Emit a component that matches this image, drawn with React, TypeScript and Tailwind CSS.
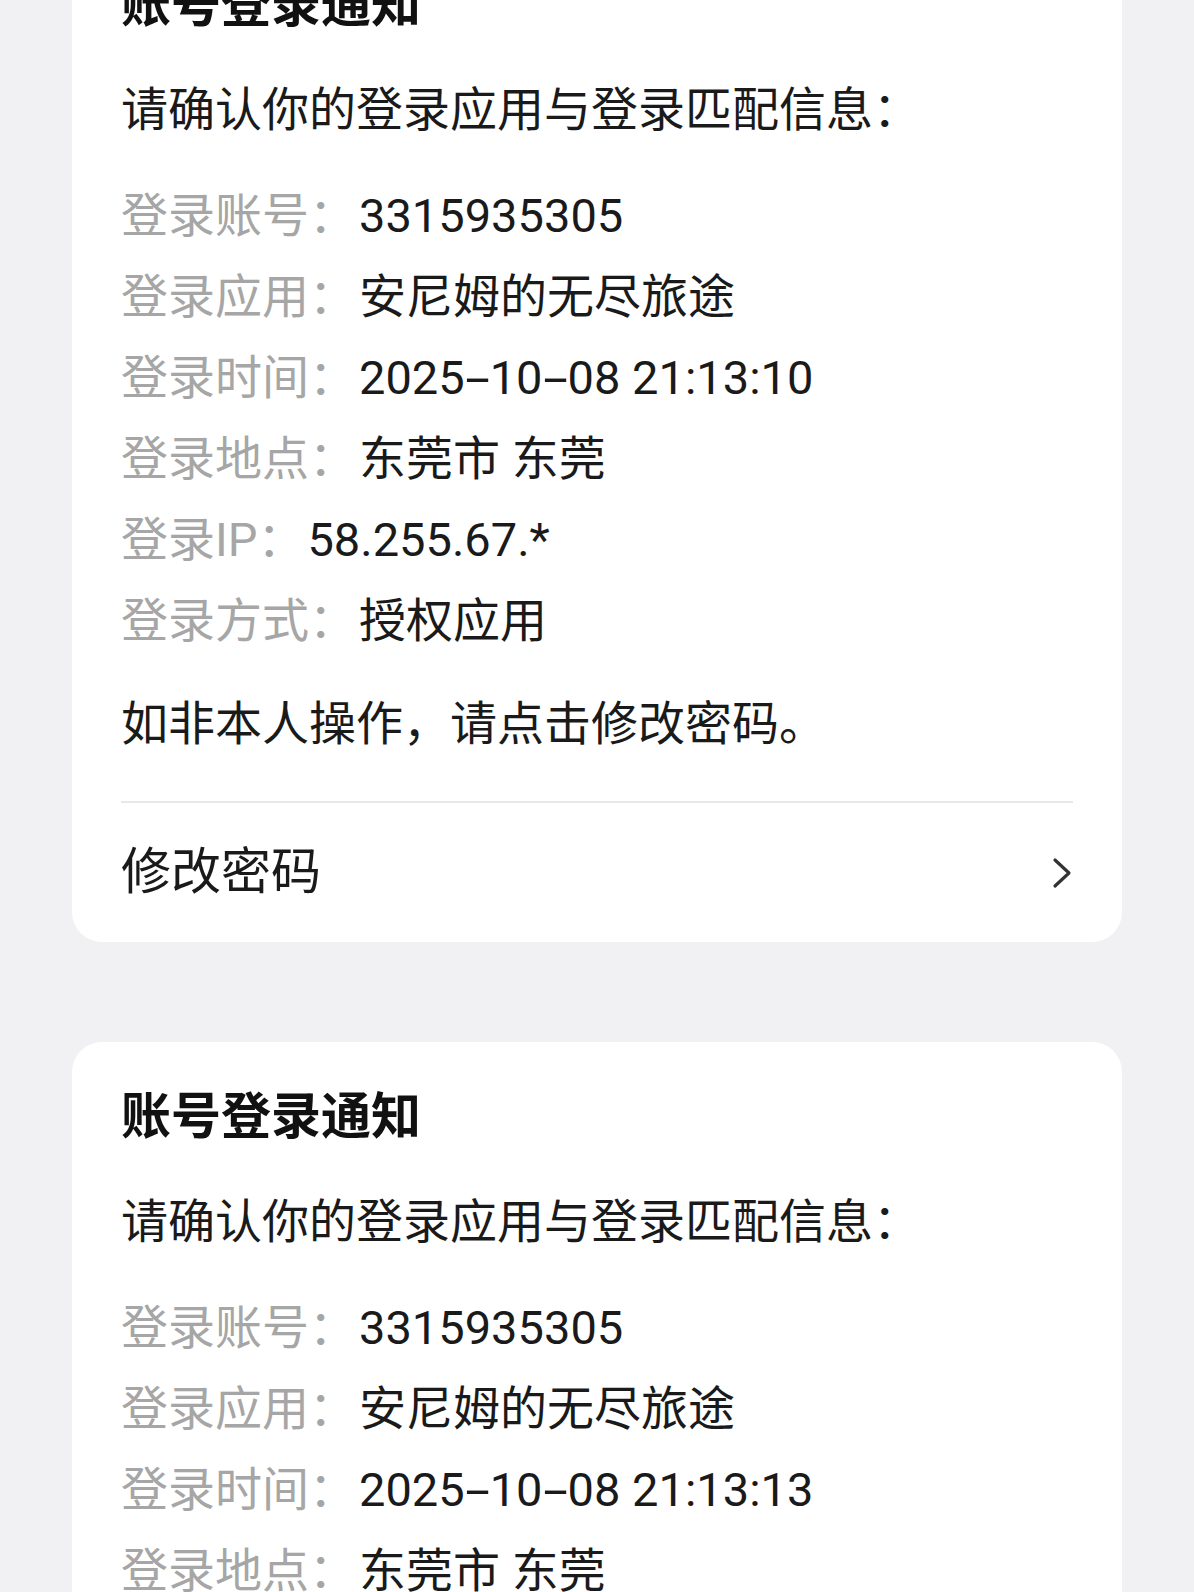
import React from "react";

type Row = [string, string];

const font = "font-[family-name:Roboto,'Noto_Sans_CJK_SC',sans-serif]";

function Value({ text }: { text: string }) {
  // the reference font draws a long hyphen; stretch Roboto's to match
  return (
    <>
      {text.split("").map((ch, i) =>
        ch === "-" ? (
          <span key={i} className="mx-[6px] inline-block scale-x-[1.9]">
            -
          </span>
        ) : (
          <React.Fragment key={i}>{ch}</React.Fragment>
        )
      )}
    </>
  );
}

function Chevron() {
  return (
    <svg width="22" height="34" viewBox="0 0 22 34" fill="none">
      <polyline
        points="4,4 18,17 4,30"
        stroke="#333333"
        strokeWidth="3.2"
        strokeLinecap="round"
        strokeLinejoin="round"
      />
    </svg>
  );
}

function NoticeCard({ time, className = "" }: { time: string; className?: string }) {
  const rows: Row[] = [
    ["登录账号：", "3315935305"],
    ["登录应用：", "安尼姆的无尽旅途"],
    ["登录时间：", time],
    ["登录地点：", "东莞市 东莞"],
    ["登录IP：", "58.255.67.*"],
    ["登录方式：", "授权应用"],
  ];

  return (
    <div className={`rounded-[30px] bg-white px-[49px] pt-[45px] ${className}`}>
      <h2 className="text-[50px] leading-[60px] font-bold text-[#111111]">账号登录通知</h2>
      <p className="mt-[34px] text-[47px] leading-[81px] text-[#1a1a1a]">请确认你的登录应用与登录匹配信息：</p>
      <div className="mt-[25px] flex flex-col">
        {rows.map(([label, value]) => (
          <p key={label} className="text-[47px] leading-[81px] whitespace-nowrap">
            <span className="text-[#a6a6a6]">{label}</span>
            <span className="ml-[3px] text-[#1a1a1a]">
              <Value text={value} />
            </span>
          </p>
        ))}
      </div>
      <p className="mt-[22px] text-[47px] leading-[81px] text-[#1a1a1a]">如非本人操作，请点击修改密码。</p>
      <div className="mt-[37px] h-[2px] bg-[#e8e8e8]" />
      <div className="flex h-[139px] items-center justify-between">
        <span className="text-[50px] text-[#1a1a1a]">修改密码</span>
        <Chevron />
      </div>
    </div>
  );
}

export default function App() {
  return (
    <div className={`min-h-screen overflow-hidden bg-[#f1f1f3] px-[72px] pb-[100px] ${font}`}>
      <div className="flex flex-col gap-[100px]">
        <NoticeCard time="2025-10-08 21:13:10" className="-mt-[70px]" />
        <NoticeCard time="2025-10-08 21:13:13" />
      </div>
    </div>
  );
}
